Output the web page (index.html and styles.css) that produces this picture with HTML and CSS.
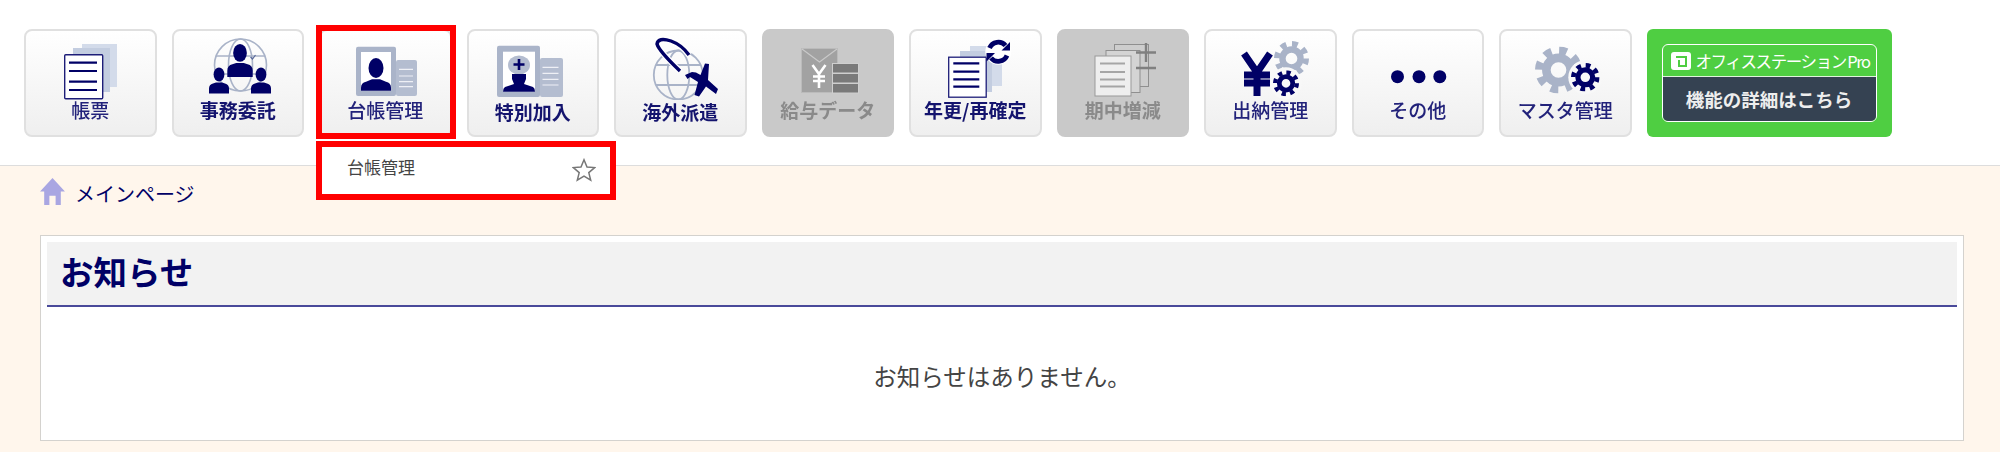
FILE: index.html
```html
<!DOCTYPE html>
<html lang="ja">
<head>
    <meta charset="UTF-8">
    <meta name="viewport" content="width=device-width, initial-scale=1.0">
    <title>メインページ</title>
    <link rel="stylesheet" href="styles.css">
</head>
<body>

    <svg class="defs" width="0" height="0">
        <symbol id="gear" viewBox="0 0 24 24">
            <circle cx="12" cy="12" r="6.2" fill="none" stroke="currentColor" stroke-width="4.4"/>
            <circle cx="12" cy="12" r="10" fill="none" stroke="currentColor" stroke-width="4" stroke-dasharray="3.93 3.93"/>
        </symbol>
        <symbol id="person" viewBox="0 0 20 26">
            <ellipse cx="10" cy="7" rx="5.4" ry="7"/>
            <path d="M0 26v-5q0-4 4-5l3-1h6l3 1q4 1 4 5v5z"/>
        </symbol>
    </svg>

    <header class="top">
        <nav class="menu">
            <a class="menu-btn">
                <svg class="icon" viewBox="0 0 100 66">
                    <rect x="42" y="10" width="35" height="43" fill="#d3dbea"/>
                    <rect x="33" y="14" width="37" height="44" fill="#c3cde0"/>
                    <rect x="24.7" y="20.7" width="38" height="44" rx="1" fill="#fff" stroke="#1d1d78" stroke-width="1.4"/>
                    <path d="M29 28.7h28M29 37h28M29 47.7h28M29 56h28" stroke="#000066" stroke-width="2.2"/>
                </svg>
                <span class="label thin">帳票</span>
            </a>
            <a class="menu-btn">
                <svg class="icon" viewBox="0 0 100 66">
                    <g fill="none" stroke="#a9b3c8" stroke-width="1.6">
                        <circle cx="52.5" cy="31" r="26"/>
                        <ellipse cx="52.5" cy="31" rx="12" ry="26"/>
                        <path d="M28 22h49M28 40h49"/>
                    </g>
                    <use href="#person" x="39" y="10" width="26" height="33" fill="#000066"/>
                    <use href="#person" x="21" y="33" width="20" height="27" fill="#000066"/>
                    <use href="#person" x="63" y="33" width="20" height="27" fill="#000066"/>
                    <path d="M62.5 23l2 2 3-4" fill="none" stroke="#5a6a9a" stroke-width="1.2"/>
                </svg>
                <span class="label">事務委託</span>
            </a>
            <a class="menu-btn is-marked">
                <svg class="icon" viewBox="0 0 100 66">
                    <rect x="61" y="26" width="21" height="36" rx="2" fill="#b4bdd0"/>
                    <path d="M64 35.3h14M64 42h14M64 47.7h14M64 52.7h14" stroke="#eef0f5" stroke-width="1.2"/>
                    <rect x="21" y="12.7" width="40" height="49.3" rx="2" fill="#aab4c9"/>
                    <rect x="26" y="18" width="30" height="38.7" fill="#fff"/>
                    <ellipse cx="41" cy="34" rx="7.5" ry="10" fill="#000066"/>
                    <path d="M26 56.7v-3q0-5 5-6l6-2.5h8l6 2.5q5 1 5 6v3z" fill="#000066"/>
                </svg>
                <span class="label thin">台帳管理</span>
                <span class="mark"></span>
                <div class="dropdown">
                    <span class="dropdown-text">台帳管理</span>
                    <svg class="star" viewBox="0 0 24 24">
                        <path d="M12 1.8l3 7.2 7.7.6-5.9 5 1.9 7.6L12 18.1l-6.7 4.1 1.9-7.6-5.9-5 7.7-.6z" fill="#fff" stroke="#777" stroke-width="1.5"/>
                    </svg>
                </div>
            </a>
            <a class="menu-btn">
                <svg class="icon" viewBox="0 0 100 66">
                    <rect x="57" y="24" width="23" height="39" rx="2" fill="#b4bdd0"/>
                    <path d="M59.5 33.3h16M59.5 39.3h16M59.5 45.3h16M59.5 51h16" stroke="#eef0f5" stroke-width="1.2"/>
                    <rect x="14" y="11.7" width="43" height="51.3" rx="2" fill="#aab4c9"/>
                    <rect x="20" y="17.7" width="32" height="40" fill="#fff"/>
                    <ellipse cx="36" cy="31" rx="11" ry="9.5" fill="#b4bdd0"/>
                    <path d="M36 25v11M30.5 30.5h11" stroke="#000066" stroke-width="2.6"/>
                    <path d="M29 40h14v5l-2 5 9 3q2 1 2 4.7H20q0-3.7 2-4.7l9-3-2-5z" fill="#000066"/>
                </svg>
                <span class="label low">特別加入</span>
            </a>
            <a class="menu-btn">
                <svg class="icon" viewBox="0 0 100 66">
                    <g fill="none" stroke="#a9b3c8" stroke-width="1.8">
                        <circle cx="48.3" cy="41" r="24.5"/>
                        <ellipse cx="48.3" cy="41" rx="11" ry="24.5"/>
                        <path d="M26 31h45M26 51h45"/>
                    </g>
                    <path d="M50 37Q29 17 27 10Q28 3 41 7Q52 11 59 21" fill="none" stroke="#fff" stroke-width="6"/>
                    <path d="M50 37Q29 17 27 10Q28 3 41 7Q52 11 59 21" fill="none" stroke="#000066" stroke-width="3.4"/>
                    <path d="M86 60L76 52.5 69 62.5 64.5 61 68 48 60 43 57.5 45 55 41 62 38 66 38.5 70.5 41 75 29.500 79 30 78 46 88 55z" fill="#000066"/>
                </svg>
                <span class="label low">海外派遣</span>
            </a>
            <a class="menu-btn is-off">
                <svg class="icon" viewBox="0 0 100 66">
                    <rect x="23.5" y="14.5" width="36" height="44" fill="#a2a2a2" stroke="#bbb"/>
                    <path d="M24 15l17.5 13L59 15" fill="none" stroke="#c9c9c9" stroke-width="1.2"/>
                    <path d="M34.5 31l6.500 9 6.500-9M41 40v14M35 42.5h12M35 47h12" fill="none" stroke="#fff" stroke-width="2.6"/>
                    <g fill="#7a7a7a" stroke="#cfcfcf" stroke-width="1">
                        <rect x="54.5" y="29.5" width="26" height="9.5"/>
                        <rect x="54.5" y="39.5" width="26" height="9.5"/>
                        <rect x="54.5" y="49.5" width="26" height="9.5"/>
                    </g>
                </svg>
                <span class="label">給与データ</span>
            </a>
            <a class="menu-btn">
                <svg class="icon" viewBox="0 0 100 66">
                    <rect x="45" y="12" width="32" height="40" fill="#d3dbea"/>
                    <rect x="35" y="17" width="32" height="41" fill="#c3cde0"/>
                    <rect x="23.7" y="23.2" width="37.5" height="40" fill="#fff" stroke="#1d1d78" stroke-width="1.3"/>
                    <path d="M28.3 29.3h26M28.3 37.7h26M28.3 45.3h26M28.3 52.7h26" stroke="#000066" stroke-width="2.2"/>
                    <circle cx="73.3" cy="17.7" r="13" fill="#fff"/>
                    <path d="M64.500 14A9.500 9.500 0 0 1 80.500 11.500M82 21.500A9.500 9.500 0 0 1 66 24" fill="none" stroke="#000066" stroke-width="4.800"/>
                    <path d="M85 8v8.500h-8.500zM61.500 27.500V19H70z" fill="#000066"/>
                </svg>
                <span class="label">年更/再確定</span>
            </a>
            <a class="menu-btn is-off">
                <svg class="icon" viewBox="0 0 100 66">
                    <rect x="41.5" y="10.5" width="34" height="42" fill="#cdcdcd" stroke="#8f8f8f"/>
                    <rect x="33" y="16.5" width="34" height="42" fill="#d4d4d4" stroke="#8f8f8f"/>
                    <rect x="22" y="22" width="36" height="40" fill="#eee" stroke="#999"/>
                    <path d="M27 29.5h25M27 38h25M27 45.5h25M27 52.5h25" stroke="#a5a5a5" stroke-width="2.2"/>
                    <path d="M63 18.5h20M73 9v19M63 34h20" stroke="#808080" stroke-width="2.4"/>
                </svg>
                <span class="label">期中増減</span>
            </a>
            <a class="menu-btn">
                <svg class="icon" viewBox="0 0 100 66">
                    <use href="#gear" x="54" y="7" width="35" height="35" class="gear-gray"/>
                    <path d="M24 19.500l13 19 13-19M37 38v24M24 41h26M24 49h26" fill="none" stroke="#000066" stroke-width="7"/>
                    <circle cx="66" cy="49.3" r="16" fill="#f8f8f8"/>
                    <use href="#gear" x="53" y="36.3" width="26" height="26" class="gear-navy"/>
                </svg>
                <span class="label thin">出納管理</span>
            </a>
            <a class="menu-btn">
                <svg class="icon" viewBox="0 0 100 66">
                    <circle cx="29.5" cy="42.7" r="6.5" fill="#000066"/>
                    <circle cx="51" cy="42.7" r="6.5" fill="#000066"/>
                    <circle cx="71.8" cy="42.7" r="6.5" fill="#000066"/>
                </svg>
                <span class="label thin">その他</span>
            </a>
            <a class="menu-btn">
                <svg class="icon" viewBox="0 0 100 66">
                    <use href="#gear" x="20" y="12.5" width="47" height="47" class="gear-gray"/>
                    <circle cx="70.3" cy="43.3" r="17" fill="#f8f8f8"/>
                    <use href="#gear" x="56" y="29" width="28.6" height="28.6" class="gear-navy"/>
                </svg>
                <span class="label thin">マスタ管理</span>
            </a>
            <a class="promo">
                <div class="promo-inner">
                    <div class="promo-top">
                        <svg class="promo-logo" viewBox="0 0 20 18">
                            <rect width="20" height="18" rx="3" fill="#fff"/>
                            <path d="M5 5h10v9H8V8" fill="none" stroke="#4fce42" stroke-width="2"/>
                        </svg>
                        <span class="promo-name">オフィスステーション Pro</span>
                    </div>
                    <div class="promo-bottom">機能の詳細はこちら</div>
                </div>
            </a>
        </nav>
    </header>

    <main class="page">
        <div class="crumb">
            <svg class="home" viewBox="0 0 24 26">
                <path d="M12 0L24 13h-4v13h-5v-9H9v9H4V13H0z" fill="#a9a6e2"/>
            </svg>
            <span>メインページ</span>
        </div>

        <section class="panel">
            <h2 class="panel-title">お知らせ</h2>
            <p class="panel-empty">お知らせはありません。</p>
        </section>
    </main>

</body>
</html>
```

FILE: styles.css
```css
body {
    margin: 0;
    height: 452px;
    overflow: hidden;
    background-color: #fff6ec;
    font-family: "Noto Sans CJK JP", "Noto Sans", sans-serif;
    color: #444;
}

.defs {
    display: block;
    height: 0;
}

.top {
    height: 136px;
    padding: 29px 0 0 24px;
    background-color: #fff;
    border-bottom: 1px solid #ddd;
}

.menu {
    display: flex;
    gap: 15px;
}

.menu-btn {
    position: relative;
    box-sizing: border-box;
    width: 132.5px;
    height: 108px;
    padding-top: 3px;
    display: flex;
    flex-direction: column;
    align-items: center;
    background: linear-gradient(#fff, #efefef);
    border: 2px solid #e0e0e0;
    border-radius: 8px;
    color: #000066;
}

.icon {
    width: 100px;
    height: 66px;
    flex: none;
    filter: blur(0.4px);
}

.label {
    margin-top: -1px;
    font-size: 19px;
    line-height: 22px;
    font-weight: 700;
    white-space: nowrap;
    color: #14146e;
    filter: blur(0.4px);
}

.label.thin {
    font-weight: 500;
    color: #22227a;
}

.label.low {
    margin-top: 1px;
}

.is-off {
    background: #c9c9c9;
    border-color: #c9c9c9;
}

.is-off .label {
    color: #8a8a8a;
}

.gear-gray {
    color: #a9b3c8;
}

.gear-navy {
    color: #000066;
}

.mark {
    position: absolute;
    top: -6px;
    left: -5px;
    width: 140px;
    height: 114px;
    box-sizing: border-box;
    border: 6px solid #f00;
}

.dropdown {
    position: absolute;
    top: 110px;
    left: -5px;
    z-index: 2;
    box-sizing: border-box;
    width: 300px;
    height: 59px;
    padding: 0 14px 0 25px;
    display: flex;
    align-items: center;
    justify-content: space-between;
    background-color: #fff;
    border: 6px solid #f00;
}

.dropdown-text {
    font-size: 17px;
    line-height: 22px;
    margin-top: -7px;
    color: #444;
}

.star {
    width: 24px;
    height: 24px;
    margin-top: -1px;
}

.promo {
    box-sizing: border-box;
    width: 245px;
    height: 108px;
    padding: 15px;
    background-color: #4fce42;
    border-radius: 6px;
}

.promo-inner {
    height: 100%;
    box-sizing: border-box;
    display: flex;
    flex-direction: column;
    border: 1.5px solid #fff;
    border-radius: 6px;
    overflow: hidden;
    color: #fff;
}

.promo-top {
    height: 31px;
    flex: none;
    padding-left: 8px;
    display: flex;
    align-items: center;
    gap: 5px;
    border-bottom: 1px solid #dff5dc;
}

.promo-logo {
    width: 20px;
    height: 18px;
    flex: none;
}

.promo-name {
    font-size: 16.5px;
    letter-spacing: -1.4px;
    word-spacing: -1px;
    white-space: nowrap;
}

.promo-bottom {
    flex: 1;
    display: flex;
    align-items: center;
    justify-content: center;
    background-color: #354252;
    font-size: 18.5px;
    font-weight: 700;
    color: #eee;
}

.page {
    padding: 0 36px 0 40px;
}

.crumb {
    height: 69px;
    padding-top: 12px;
    box-sizing: border-box;
    display: flex;
    align-items: flex-start;
    gap: 10px;
    font-size: 20px;
    line-height: 32px;
    color: #000066;
}

.home {
    width: 25px;
    height: 27px;
}

.panel {
    box-sizing: border-box;
    height: 206px;
    padding: 6px;
    background-color: #fff;
    border: 1px solid #d4d2ce;
}

.panel-title {
    margin: 0;
    box-sizing: border-box;
    height: 65px;
    padding-left: 13px;
    background-color: #f2f2f2;
    border-bottom: 2px solid #4a4a9a;
    font-size: 33.5px;
    line-height: 58px;
    font-weight: 700;
    color: #000066;
}

.panel-empty {
    margin: 54px 0 0;
    text-align: center;
    font-size: 23.5px;
    line-height: 30px;
}
```
